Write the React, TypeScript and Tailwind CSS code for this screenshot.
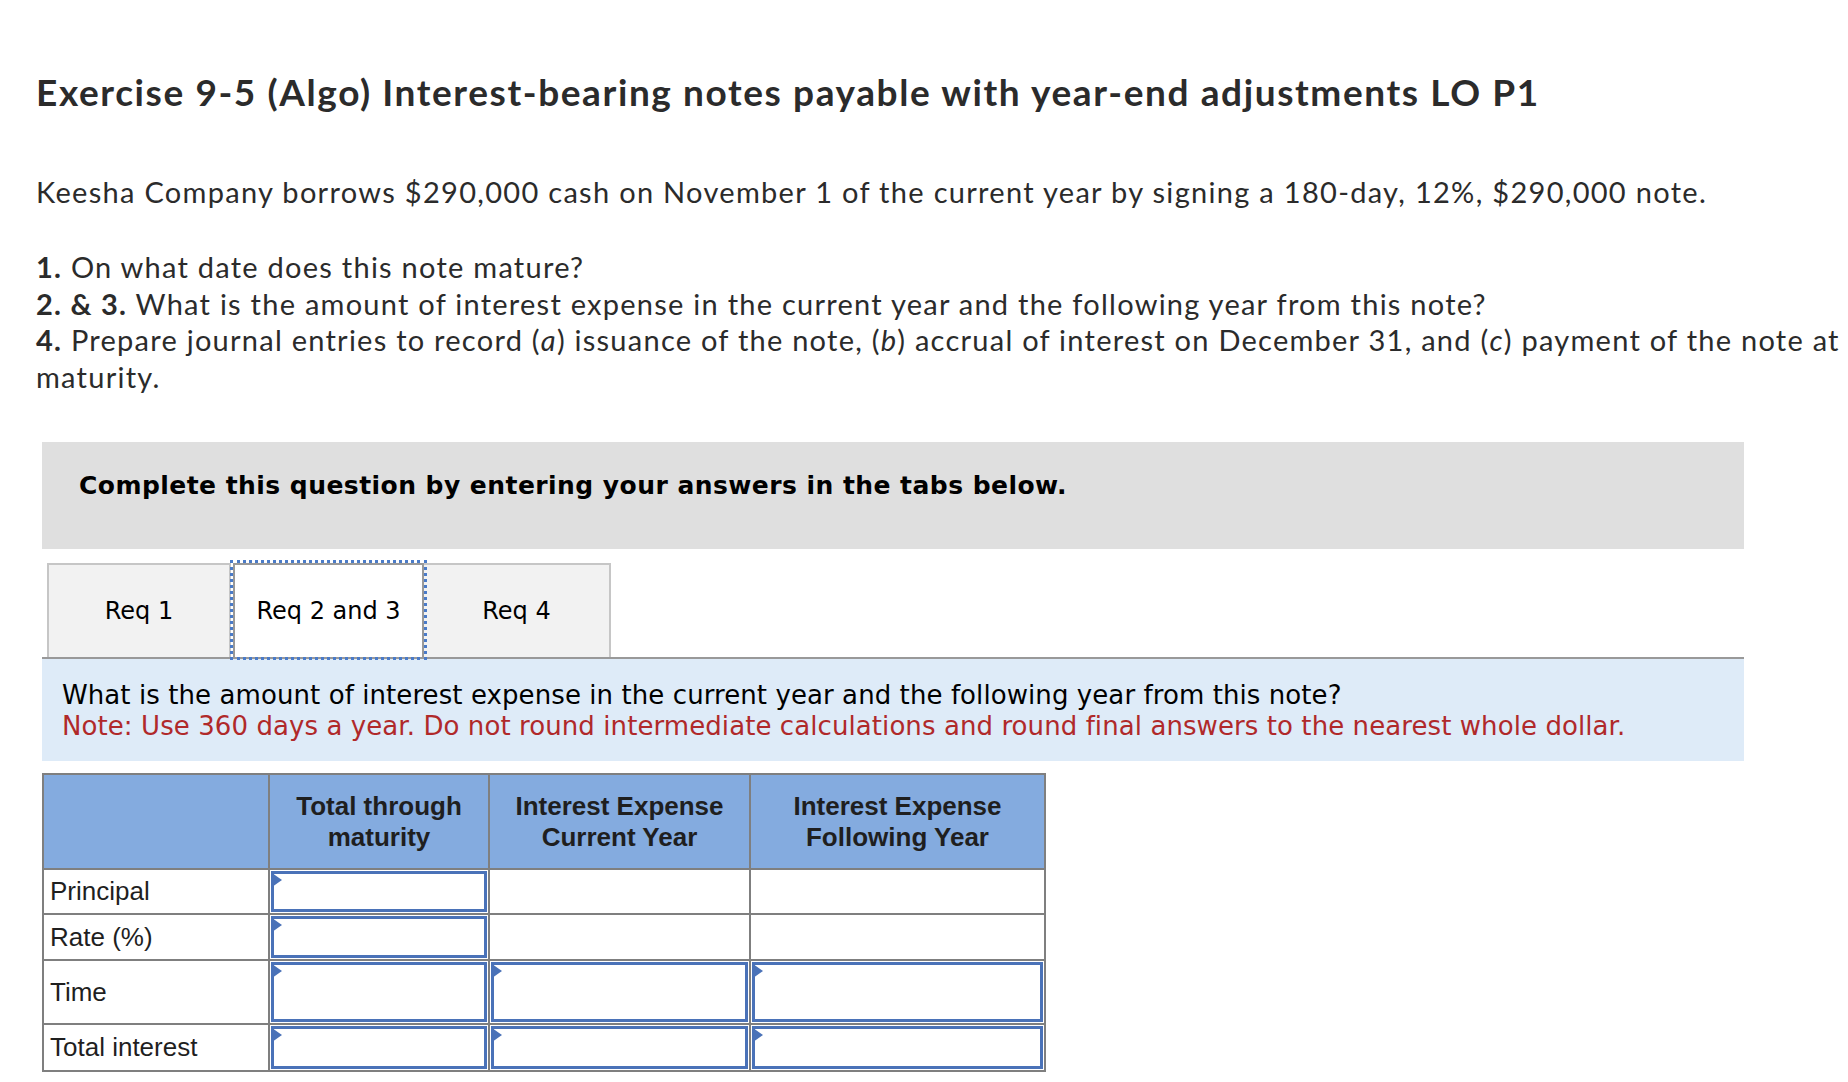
import React from "react";

const proxima = { fontFamily: "Lato, 'Open Sans', sans-serif" };
const verdana = { fontFamily: "'DejaVu Sans', Verdana, sans-serif" };
const arial = { fontFamily: "'Liberation Sans', Arial, sans-serif" };

function InputBox() {
  return (
    <div className="relative h-full w-full p-[1px]">
      <div className="h-full w-full border-[3px] border-[#4a72b8] bg-white" />
      <div className="absolute left-[2px] top-[3px] h-0 w-0 border-y-[7px] border-y-transparent border-l-[10px] border-l-[#4a72b8]" />
    </div>
  );
}

export default function App() {
  const cols = "grid grid-cols-[226px_220px_261px_293px]";
  return (
    <div className="relative min-h-[1082px] w-[1848px] overflow-hidden bg-white">
      <div className="pl-[36px] pt-[74px] text-[#2b2b2b]" style={proxima}>
        <h1 className="whitespace-nowrap text-[37px] font-bold leading-[36px] tracking-[1.6px]">
          Exercise 9-5 (Algo) Interest-bearing notes payable with year-end adjustments LO P1
        </h1>
        <p className="mt-[64px] whitespace-nowrap text-[29px] leading-[36px] tracking-[1.3px]">
          Keesha Company borrows $290,000 cash on November 1 of the current year by signing a 180-day, 12%, $290,000 note.
        </p>
        <div className="mt-[39px] whitespace-nowrap text-[29px] leading-[36.5px] tracking-[1.25px]">
          <div>
            <b>1.</b> On what date does this note mature?
          </div>
          <div>
            <b>2. &amp; 3.</b> What is the amount of interest expense in the current year and the following year from this note?
          </div>
          <div>
            <b>4.</b> Prepare journal entries to record (<i>a</i>) issuance of the note, (<i>b</i>) accrual of interest on December 31, and (<i>c</i>) payment of the note at
          </div>
          <div>maturity.</div>
        </div>
      </div>

      <div className="ml-[42px] mt-[47px] w-[1702px]" style={verdana}>
        <div className="h-[107px] bg-[#dfdfdf] px-[37px] pt-[29px]">
          <div className="text-[25px] font-bold leading-[30px] tracking-[0.45px] text-black">
            Complete this question by entering your answers in the tabs below.
          </div>
        </div>

        <div className="mt-[14px] flex h-[94px] items-stretch pl-[5px]">
          <div className="flex w-[184px] items-center justify-center border-2 border-b-0 border-[#c6c6c6] bg-[#f2f2f2] text-[24px] text-black">
            Req 1
          </div>
          <div className="relative ml-[2px] flex w-[191px] items-center justify-center border-2 border-b-0 border-[#999999] bg-white text-[24px] text-black outline-[3px] outline-dotted outline-[#4a7bc8] outline-offset-[0px]">
            Req 2 and 3
          </div>
          <div className="flex w-[187px] items-center justify-center border-2 border-b-0 border-l-0 border-[#c6c6c6] bg-[#f2f2f2] text-[24px] text-black">
            Req 4
          </div>
        </div>
        <div className="h-[2px] bg-[#999999]" />
        <div className="h-[102px] bg-[#deebf8] px-[20px] pt-[21px] text-[26px] leading-[31px] tracking-[0.08px]">
          <div className="text-black">
            What is the amount of interest expense in the current year and the following year from this note?
          </div>
          <div className="text-[#b0292a]">
            Note: Use 360 days a year. Do not round intermediate calculations and round final answers to the nearest whole dollar.
          </div>
        </div>
      </div>

      <div className="ml-[42px] mt-[12px] w-[1004px] border-2 border-[#7f7f7f]" style={arial}>
        <div className={`${cols} h-[95px] bg-[#84abdf] text-[26px] font-bold leading-[31px] text-[#1f1f1f]`}>
          <div className="border-b-2 border-r-2 border-[#7f7f7f]" />
          <div className="flex items-center justify-center border-b-2 border-r-2 border-[#7f7f7f] text-center">
            Total through<br />maturity
          </div>
          <div className="flex items-center justify-center border-b-2 border-r-2 border-[#7f7f7f] text-center">
            Interest Expense<br />Current Year
          </div>
          <div className="flex items-center justify-center border-b-2 border-[#7f7f7f] text-center">
            Interest Expense<br />Following Year
          </div>
        </div>

        <div className={`${cols} h-[45px] text-[26px] text-[#1f1f1f]`}>
          <div className="flex items-center border-b-2 border-r-2 border-[#7f7f7f] pl-[6px]">Principal</div>
          <div className="border-b-2 border-r-2 border-[#7f7f7f]"><InputBox /></div>
          <div className="border-b-2 border-r-2 border-[#7f7f7f]" />
          <div className="border-b-2 border-[#7f7f7f]" />
        </div>
        <div className={`${cols} h-[46px] text-[26px] text-[#1f1f1f]`}>
          <div className="flex items-center border-b-2 border-r-2 border-[#7f7f7f] pl-[6px]">Rate (%)</div>
          <div className="border-b-2 border-r-2 border-[#7f7f7f]"><InputBox /></div>
          <div className="border-b-2 border-r-2 border-[#7f7f7f]" />
          <div className="border-b-2 border-[#7f7f7f]" />
        </div>
        <div className={`${cols} h-[64px] text-[26px] text-[#1f1f1f]`}>
          <div className="flex items-center border-b-2 border-r-2 border-[#7f7f7f] pl-[6px]">Time</div>
          <div className="border-b-2 border-r-2 border-[#7f7f7f]"><InputBox /></div>
          <div className="border-b-2 border-r-2 border-[#7f7f7f]"><InputBox /></div>
          <div className="border-b-2 border-[#7f7f7f]"><InputBox /></div>
        </div>
        <div className={`${cols} h-[45px] text-[26px] text-[#1f1f1f]`}>
          <div className="flex items-center border-r-2 border-[#7f7f7f] pl-[6px]">Total interest</div>
          <div className="border-r-2 border-[#7f7f7f]"><InputBox /></div>
          <div className="border-r-2 border-[#7f7f7f]"><InputBox /></div>
          <div><InputBox /></div>
        </div>
      </div>
    </div>
  );
}
